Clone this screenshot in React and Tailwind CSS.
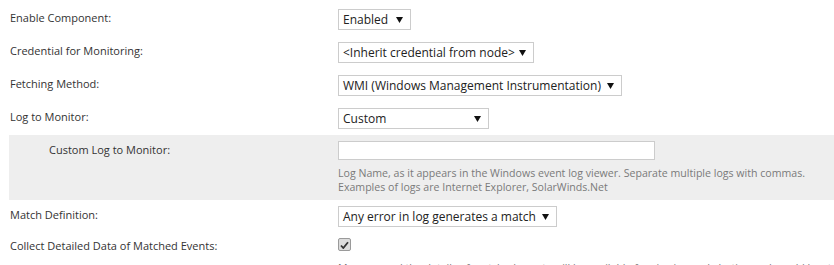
import React from 'react';

const font = { fontFamily: '"Open Sans", "Liberation Sans", sans-serif' };

function Arrow() {
  return (
    <svg className="w-[7px] h-[6px]" viewBox="0 0 7 6">
      <path d="M0 0h7L3.5 6z" fill="#111" />
    </svg>
  );
}

function Select({ value, width }) {
  return (
    <div className={`${width} h-[21px] border border-[#cccccc] bg-white flex items-center justify-between pl-[4px] pr-[7px] text-[12px] text-[#222]`}>
      <span className="whitespace-nowrap">{value}</span>
      <Arrow />
    </div>
  );
}

function Row({ label, children, top = 'mt-[9px]' }) {
  return (
    <div className="flex">
      <div className={`w-[338px] shrink-0 pl-[10px] ${top} pt-[1px] text-[11px] leading-[15px] text-[#333]`}>{label}</div>
      <div className={top}>{children}</div>
    </div>
  );
}

export default function App() {
  return (
    <div className="w-[834px] h-[265px] overflow-hidden bg-white" style={font}>
      <Row label="Enable Component:"><Select value="Enabled" width="w-[73px]" /></Row>
      <div className="h-[3px]" />
      <Row label="Credential for Monitoring:"><Select value="<Inherit credential from node>" width="w-[196px]" /></Row>
      <div className="h-[3px]" />
      <Row label="Fetching Method:"><Select value="WMI (Windows Management Instrumentation)" width="w-[284px]" /></Row>
      <div className="h-[3px]" />
      <Row label="Log to Monitor:"><Select value="Custom" width="w-[151px]" /></Row>

      <div className="ml-[9px] mt-[6px] h-[65px] bg-[#eeeeee] flex">
        <div className="w-[329px] shrink-0 pl-[40px] pt-[7px] text-[11px] leading-[15px] text-[#333]">Custom Log to Monitor:</div>
        <div className="pt-[6px]">
          <div className="w-[317px] h-[19px] border border-[#cccccc] bg-white" />
          <div className="mt-[6px] text-[10.6px] leading-[14px] text-[#7a7a7a] whitespace-nowrap">
            Log Name, as it appears in the Windows event log viewer. Separate multiple logs with commas.<br />
            Examples of logs are Internet Explorer, SolarWinds.Net
          </div>
        </div>
      </div>

      <div className="flex">
        <div className="w-[338px] shrink-0 pl-[10px] mt-[6px] pt-[1px] text-[11px] leading-[15px] text-[#333]">Match Definition:</div>
        <div className="mt-[6px]"><Select value="Any error in log generates a match" width="w-[219px]" /></div>
      </div>

      <div className="flex">
        <div className="w-[338px] shrink-0 pl-[10px] mt-[11px] text-[11px] leading-[15px] text-[#333]">Collect Detailed Data of Matched Events:</div>
        <div className="mt-[11px] min-w-0">
          <div className="w-[13px] h-[13px] border border-[#9a9a9a] rounded-[2px] bg-[#dcdcdc] flex items-center justify-center">
            <svg className="w-[9px] h-[8px]" viewBox="0 0 9 8">
              <path d="M1 4.5L3.3 7L8 1.2" stroke="#333" strokeWidth="1.8" fill="none" />
            </svg>
          </div>
          <div className="mt-[10px] text-[10.6px] leading-[14px] text-[#7a7a7a] whitespace-nowrap">
            Message and the details of matched events will be available for viewing and alerting and would be stored in the database.
          </div>
        </div>
      </div>
    </div>
  );
}
